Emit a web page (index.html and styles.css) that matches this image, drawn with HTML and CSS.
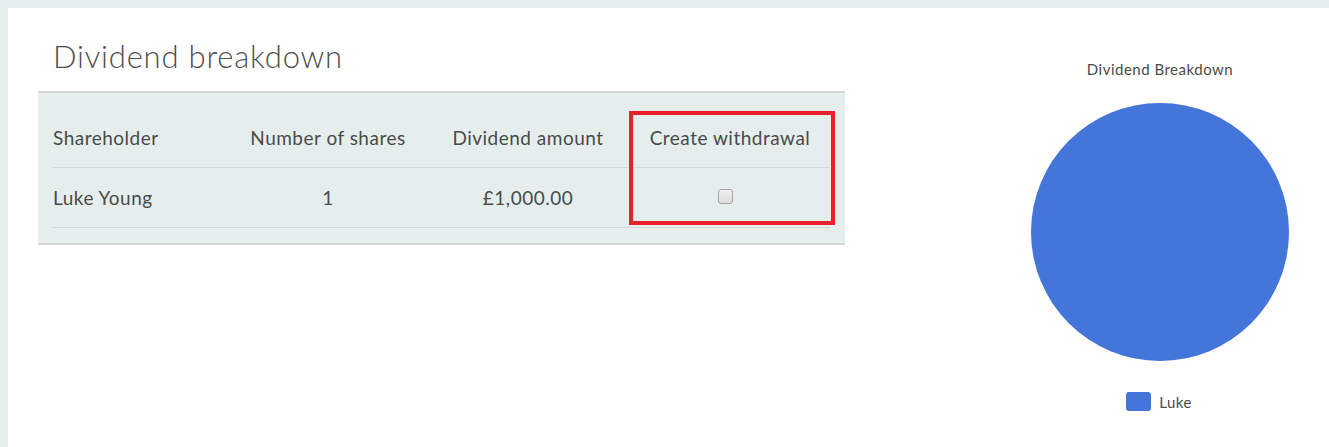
FILE: index.html
```html
<!DOCTYPE html>
<html>
<head>
<meta charset="utf-8">
<link rel="stylesheet" href="styles.css">
</head>
<body>
<div class="panel">
  <section class="breakdown">
    <h1 class="title">Dividend breakdown</h1>
    <div class="table-wrap">
      <table class="table">
        <colgroup>
          <col class="c1"><col class="c2"><col class="c3"><col class="c4">
        </colgroup>
        <thead>
          <tr><th class="left">Shareholder</th><th>Number of shares</th><th>Dividend amount</th><th>Create withdrawal</th></tr>
        </thead>
        <tbody>
          <tr><td class="left">Luke Young</td><td>1</td><td>£1,000.00</td><td><span class="checkbox"></span></td></tr>
        </tbody>
      </table>
      <div class="highlight"></div>
    </div>
  </section>
  <aside class="chart">
    <div class="chart-title">Dividend Breakdown</div>
    <div class="pie"></div>
    <div class="legend"><span class="swatch"></span><span>Luke</span></div>
  </aside>
</div>
</body>
</html>
```
FILE: styles.css
```css
html, body { margin: 0; padding: 0; }
body {
  background: #e6eeed;
  font-family: Lato, "Open Sans", sans-serif;
  color: #4a4a4a;
  padding: 8px 0 0 8px;
  height: 439px;
  overflow: hidden;
}
.panel {
  background: #fff;
  height: 439px;
  display: flex;
  align-items: flex-start;
  padding-left: 30px;
}
.breakdown { width: 807px; }
.title {
  margin: 0;
  padding: 30px 0 0 15px;
  height: 53px;
  font-size: 31px;
  font-weight: 300;
  letter-spacing: 0.8px;
  line-height: 36px;
  color: #4d4d4d;
}
.table-wrap {
  position: relative;
  background: #e6eeed;
  border-top: 2px solid #d3d7d7;
  border-bottom: 2px solid #d3d7d7;
  padding: 15px 15px;
}
.table {
  width: 777px;
  border-collapse: collapse;
  table-layout: fixed;
  font-size: 19px;
  letter-spacing: 0.5px;
}
.c1 { width: 177px; } .c2 { width: 196px; } .c3 { width: 204px; } .c4 { width: 200px; }
.table th, .table td {
  height: 59px;
  padding: 0;
  text-align: center;
  font-weight: 400;
  vertical-align: middle;
  border-bottom: 1px solid #d3d8d8;
}
.table .left { text-align: left; }
.checkbox {
  display: inline-block;
  width: 13px;
  height: 13px;
  border: 1px solid #a6a6a6;
  border-radius: 3px;
  background: linear-gradient(#f0f0f0, #dcdcdc);
  vertical-align: middle;
  position: relative;
  top: -4px;
  left: -5px;
}
.highlight {
  position: absolute;
  left: 591px;
  top: 18px;
  width: 198px;
  height: 106px;
  border: 4px solid #e8202a;
}
.chart {
  margin-left: auto;
  margin-right: 9px;
  width: 320px;
  display: flex;
  flex-direction: column;
  align-items: center;
}
.chart-title {
  margin-top: 52px;
  font-size: 15px;
  letter-spacing: 0.5px;
  line-height: 19px;
  color: #4a4a4a;
}
.pie {
  margin-top: 24px;
  width: 258px;
  height: 258px;
  border-radius: 50%;
  background: #4475d8;
}
.legend {
  margin-top: 31px;
  display: flex;
  align-items: center;
  gap: 8px;
  font-size: 15px;
  letter-spacing: 0.5px;
  margin-left: -2px;
}
.swatch {
  width: 25px;
  height: 19px;
  border-radius: 3px;
  background: #4475d8;
}
```
